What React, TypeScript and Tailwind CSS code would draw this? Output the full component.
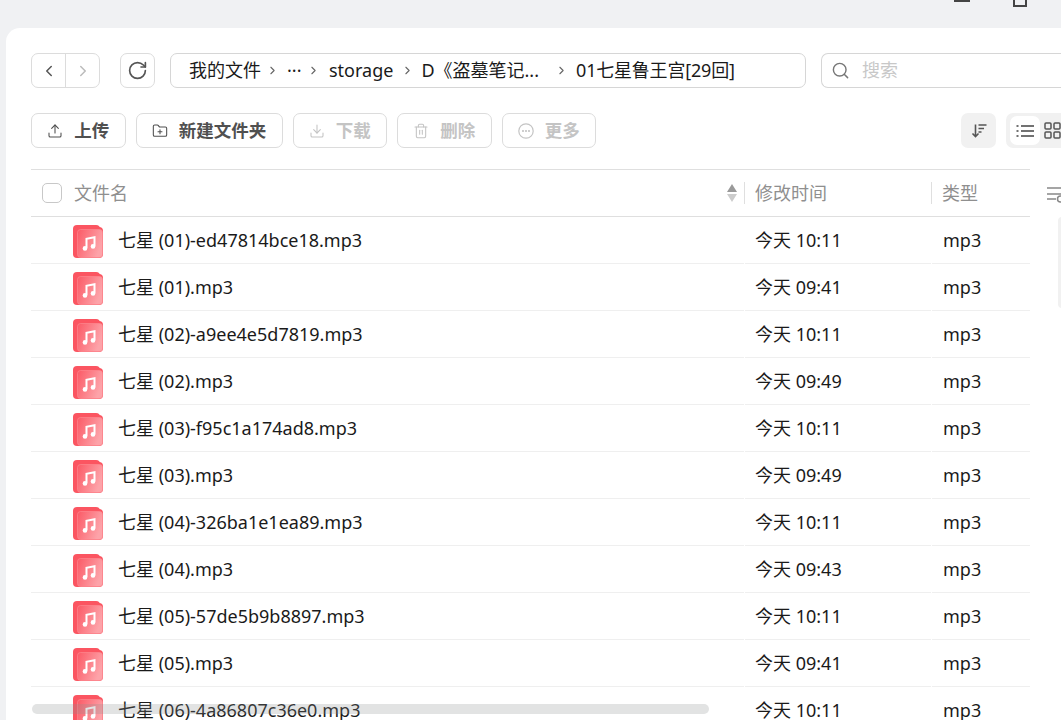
import { ChevronLeft, ChevronRight, RotateCw, Search, Upload, FolderPlus, Download, Trash2 } from 'lucide-react';
import type { ReactNode } from 'react';

const files = [
  { name: '七星 (01)-ed47814bce18.mp3', time: '今天 10:11' },
  { name: '七星 (01).mp3', time: '今天 09:41' },
  { name: '七星 (02)-a9ee4e5d7819.mp3', time: '今天 10:11' },
  { name: '七星 (02).mp3', time: '今天 09:49' },
  { name: '七星 (03)-f95c1a174ad8.mp3', time: '今天 10:11' },
  { name: '七星 (03).mp3', time: '今天 09:49' },
  { name: '七星 (04)-326ba1e1ea89.mp3', time: '今天 10:11' },
  { name: '七星 (04).mp3', time: '今天 09:43' },
  { name: '七星 (05)-57de5b9b8897.mp3', time: '今天 10:11' },
  { name: '七星 (05).mp3', time: '今天 09:41' },
  { name: '七星 (06)-4a86807c36e0.mp3', time: '今天 10:11' },
];

function MusicIcon() {
  return (
    <svg width="30" height="33" viewBox="0 0 30 33" className="shrink-0 mt-[2px]">
      <defs>
        <linearGradient id="front" x1="0" y1="0" x2="1" y2="0.4">
          <stop offset="0" stopColor="#fb5a66" />
          <stop offset="1" stopColor="#fda3a9" />
        </linearGradient>
      </defs>
      <rect x="0" y="0" width="27" height="30" rx="4" fill="#fb5561" />
      <rect x="0" y="2" width="30" height="31" rx="4" fill="#fb5561" />
      <rect x="4.5" y="4.5" width="25" height="28" rx="3" fill="url(#front)" stroke="#fd8f96" strokeWidth="0.6" />
      <path d="M13.5 23V13.8l8-1.5v9" fill="none" stroke="#fff" strokeWidth="2" />
      <circle cx="12" cy="23.4" r="2.3" fill="#fff" />
      <circle cx="20" cy="21.4" r="2.3" fill="#fff" />
    </svg>
  );
}

function MoreIcon() {
  return (
    <svg width="16" height="16" viewBox="0 0 16 16" fill="none" stroke="currentColor" strokeWidth="1.2">
      <circle cx="8" cy="8" r="7.2" />
      <circle cx="5" cy="8" r="0.5" />
      <circle cx="8" cy="8" r="0.5" />
      <circle cx="11" cy="8" r="0.5" />
    </svg>
  );
}

function ActionButton({ icon, label, disabled }: { icon: ReactNode; label: string; disabled?: boolean }) {
  return (
    <button className={`h-[35px] px-[15.25px] shrink-0 flex items-center gap-[11px] whitespace-nowrap rounded-[7px] border border-[#dcdcdc] text-[17.5px] font-bold ${disabled ? 'text-[#c4c4c4]' : 'text-[#505050]'}`}>
      {icon}
      <span>{label}</span>
    </button>
  );
}

function Crumb() {
  return <ChevronRight size={13} strokeWidth={2} className="text-[#666] shrink-0" />;
}

export default function App() {
  return (
    <div className="h-[720px] w-[1061px] overflow-hidden bg-[#f0f1f3] relative font-['Noto_Sans','Noto_Sans_CJK_SC',sans-serif]">
      <div className="h-[28px] flex justify-end items-start pr-[34px] gap-[43px]">
        <div className="w-[16px] h-[2px] border-b-2 border-[#444]" />
        <div className="w-[14px] h-[7px] border-2 border-t-0 border-[#444]" />
      </div>

      <div className="ml-[6px] h-[692px] bg-white rounded-tl-[14px] pt-[25px] pl-[25px]">
        {/* address row */}
        <div className="flex items-center h-[35px]">
          <div className="w-[69px] h-[35px] shrink-0 flex rounded-[7px] border border-[#dcdcdc]">
            <div className="flex-1 flex items-center justify-center border-r border-[#dcdcdc]">
              <ChevronLeft size={18} className="text-[#555]" />
            </div>
            <div className="flex-1 flex items-center justify-center">
              <ChevronRight size={18} className="text-[#bbb]" />
            </div>
          </div>
          <div className="ml-[20px] w-[35px] h-[35px] shrink-0 flex items-center justify-center rounded-[7px] border border-[#dcdcdc]">
            <RotateCw size={21} strokeWidth={1.9} className="text-[#555]" />
          </div>
          <div className="ml-[15px] w-[636px] h-[35px] shrink-0 flex items-center pl-[18px] rounded-[7px] border border-[#d6d6d6] text-[18px] text-[#1a1a1a] whitespace-nowrap">
            <span>我的文件</span>
            <span className="ml-[5px]"><Crumb /></span>
            <span className="ml-[8px] w-[18px]">···</span>
            <span className="ml-[2px]"><Crumb /></span>
            <span className="ml-[9px]">storage</span>
            <span className="ml-[8px]"><Crumb /></span>
            <span className="ml-[7px]">D《盗墓笔记...</span>
            <span className="ml-[16px]"><Crumb /></span>
            <span className="ml-[8px] tracking-[-0.2px]">01七星鲁王宫[29回]</span>
          </div>
          <div className="ml-[15px] w-[260px] h-[35px] shrink-0 flex items-center pl-[9px] gap-[12px] rounded-l-[7px] border border-r-0 border-[#d6d6d6] text-[18px] text-[#c8c8c8]">
            <Search size={19} strokeWidth={1.8} className="text-[#777]" />
            <span>搜索</span>
          </div>
        </div>

        {/* action row */}
        <div className="mt-[25px] flex items-center h-[35px]">
          <div className="flex gap-[10px]">
            <ActionButton icon={<Upload size={16} strokeWidth={1.6} />} label="上传" />
            <ActionButton icon={<FolderPlus size={16} strokeWidth={1.6} />} label="新建文件夹" />
            <ActionButton icon={<Download size={16} strokeWidth={1.6} />} label="下载" disabled />
            <ActionButton icon={<Trash2 size={16} strokeWidth={1.6} />} label="删除" disabled />
            <ActionButton icon={<MoreIcon />} label="更多" disabled />
          </div>
          <div className="ml-auto w-[35px] h-[35px] shrink-0 flex items-center justify-center rounded-[7px] bg-[#f1f1f1]">
            <svg width="16" height="16" viewBox="0 0 16 16" fill="none" stroke="#555" strokeWidth="1.6">
              <path d="M4.5 1.5v12M1.5 10.5l3 3.2 3-3.2M7.5 2h8M7.5 5.5h5.5M7.5 9h3" />
            </svg>
          </div>
          <div className="ml-[10px] w-[55px] h-[35px] shrink-0 flex items-center pl-[4px] rounded-l-[7px] bg-[#f1f1f1]">
            <div className="w-[30px] h-[29px] rounded-[7px] bg-white flex items-center justify-center">
              <svg width="18" height="14" viewBox="0 0 18 14" fill="none" stroke="#444" strokeWidth="1.5">
                <path d="M5 2h13M5 7h13M5 12h13M0.5 2h2M0.5 7h2M0.5 12h2" />
              </svg>
            </div>
            <svg width="17" height="17" viewBox="0 0 17 17" fill="none" stroke="#555" strokeWidth="1.5" className="ml-[4px] shrink-0">
              <rect x="1" y="1" width="6" height="6" rx="1" />
              <rect x="10" y="1" width="6" height="6" rx="1" />
              <rect x="1" y="10" width="6" height="6" rx="1" />
              <rect x="10" y="10" width="6" height="6" rx="1" />
            </svg>
          </div>
        </div>

        {/* table */}
        <div className="mt-[21px] flex">
          <div className="w-[999px] shrink-0">
            <div className="h-[48px] flex items-center border-y border-[#dfdfdf] text-[18px] text-[#8f8f8f]">
              <div className="ml-[11px] w-[20px] h-[20px] rounded-[5px] border border-[#c8c8c8]" />
              <span className="ml-[12px]">文件名</span>
              <div className="ml-auto flex flex-col gap-[2px] mr-[7px]">
                <div className="w-0 h-0 border-x-[5px] border-x-transparent border-b-[8px] border-b-[#999]" />
                <div className="w-0 h-0 border-x-[5px] border-x-transparent border-t-[8px] border-t-[#ccc]" />
              </div>
              <div className="w-[187px] shrink-0 flex items-center border-l border-[#dfdfdf] h-[22px] pl-[10px]">修改时间</div>
              <div className="w-[99px] shrink-0 flex items-center border-l border-[#dfdfdf] h-[22px] pl-[10px]">类型</div>
            </div>
            {files.map(f => (
              <div key={f.name} className="h-[47px] flex text-[18px] text-[#1a1a1a] whitespace-nowrap">
                <div className="flex-1 flex items-center border-b border-[#efefef]">
                  <div className="ml-[42px] w-[45px] shrink-0"><MusicIcon /></div>
                  <span>{f.name}</span>
                </div>
                <span className="ml-px w-[186px] shrink-0 flex items-center pl-[10px] border-b border-[#efefef]">{f.time}</span>
                <span className="ml-px w-[98px] shrink-0 flex items-center pl-[11px] border-b border-[#efefef]">mp3</span>
              </div>
            ))}
          </div>
          <div className="ml-[17px] shrink-0 w-[14px] relative">
            <svg width="16" height="17" viewBox="0 0 16 17" fill="none" stroke="#888" strokeWidth="1.5" className="mt-[17px]">
              <path d="M0 2h14M0 8h14M0 13h9" />
              <circle cx="13.5" cy="13" r="3" />
            </svg>
            <div className="absolute left-[11px] top-[48px] w-[10px] h-[91px] rounded-l-[4px] bg-[#f1f1f1]" />
          </div>
        </div>
      </div>

      <div className="absolute left-[32px] top-[704px] w-[677px] h-[10px] rounded-full bg-[#8a9090]/25" />
    </div>
  );
}
